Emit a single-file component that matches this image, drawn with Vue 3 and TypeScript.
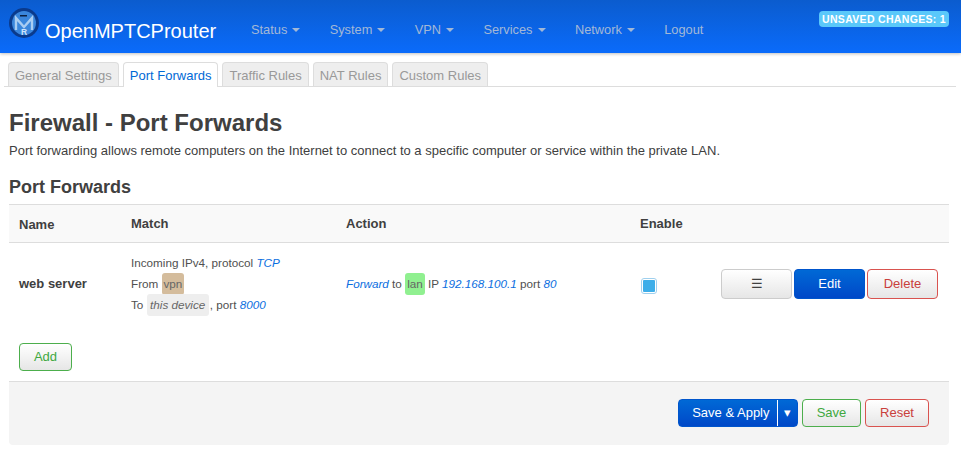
<script setup lang="ts">
const navItems: { label: string; caret: boolean }[] = [
  { label: 'Status', caret: true },
  { label: 'System', caret: true },
  { label: 'VPN', caret: true },
  { label: 'Services', caret: true },
  { label: 'Network', caret: true },
  { label: 'Logout', caret: false },
]
const tabs = ['General Settings', 'Port Forwards', 'Traffic Rules', 'NAT Rules', 'Custom Rules']
</script>

<template>
  <div class="page">
    <header class="topbar">
      <a class="brand">
        <svg class="logo" width="32" height="32" viewBox="0 0 32 32">
          <circle cx="16" cy="16" r="15" fill="#0a3a8c" />
          <circle cx="16" cy="16" r="12" fill="#3a86dc" />
          <rect x="12" y="8" width="7" height="1.5" fill="#0b1f40" />
          <path d="M8 23V11l8 9 8-9v12" fill="none" stroke="#a9cdf2" stroke-width="2.4" />
          <text x="16" y="27.5" font-size="8.5" font-weight="700" text-anchor="middle" fill="#cfe4fa" font-family="Liberation Sans, sans-serif">R</text>
        </svg>
        <span class="brand-name">OpenMPTCProuter</span>
      </a>
      <nav class="nav">
        <a v-for="item in navItems" :key="item.label" class="nav-item">
          {{ item.label }}<i v-if="item.caret" class="caret"></i>
        </a>
      </nav>
      <span class="unsaved">UNSAVED CHANGES: 1</span>
    </header>

    <main class="content">
      <ul class="tabs">
        <li v-for="tab in tabs" :key="tab" class="tab" :class="{ active: tab === 'Port Forwards' }">{{ tab }}</li>
      </ul>

      <h2 class="title">Firewall - Port Forwards</h2>
      <p class="desc">Port forwarding allows remote computers on the Internet to connect to a specific computer or service within the private LAN.</p>
      <h3 class="subtitle">Port Forwards</h3>

      <table class="table">
        <colgroup>
          <col class="c1" /><col class="c2" /><col class="c3" /><col class="c4" /><col />
        </colgroup>
        <thead>
          <tr>
            <th class="th-name">Name</th>
            <th>Match</th>
            <th>Action</th>
            <th>Enable</th>
            <th></th>
          </tr>
        </thead>
        <tbody>
          <tr>
            <td class="name">web server</td>
            <td class="match">
              <div>Incoming IPv4, protocol <var>TCP</var></div>
              <div>From <span class="zone vpn">vpn</span></div>
              <div>To <span class="zone device"><em>this device</em></span>, port <var>8000</var></div>
            </td>
            <td class="action">
              <var>Forward</var> to <span class="zone lan">lan</span> IP <var>192.168.100.1</var> port <var>80</var>
            </td>
            <td class="enable"><span class="check"></span></td>
            <td>
              <div class="row-btns">
                <button class="btn neutral">☰</button>
                <button class="btn primary">Edit</button>
                <button class="btn danger">Delete</button>
              </div>
            </td>
          </tr>
        </tbody>
      </table>

      <div class="add-row"><button class="btn success add">Add</button></div>

      <div class="actions">
        <div class="split">
          <span class="split-main">Save &amp; Apply</span>
          <span class="split-arrow">▾</span>
        </div>
        <button class="btn success save">Save</button>
        <button class="btn danger reset">Reset</button>
      </div>
    </main>
  </div>
</template>

<style>
html, body { margin: 0; background: #fff; }
</style>

<style scoped>
.page {
  font-family: "Liberation Sans", Arial, sans-serif;
  font-size: 13px;
  color: #404040;
  line-height: 18px;
}
.topbar {
  display: flex;
  height: 53px;
  background: linear-gradient(to bottom, #0b5cce, #0a6bfb);
  box-shadow: 0 1px 3px rgba(0, 0, 0, 0.25);
  box-sizing: border-box;
  padding-left: 8px;
  position: relative;
}
.brand { display: flex; width: 243px; flex: none; }
.logo { margin-top: 7px; flex: none; }
.brand-name {
  color: #fff;
  font-size: 20px;
  line-height: 24px;
  margin: 19px 0 0 5px;
}
.nav { display: flex; flex: 1; align-items: flex-start; }
.nav-item {
  color: #a3b8d6;
  font-size: 12.8px;
  padding: 21px 0 0;
  margin-right: 29.4px;
  white-space: nowrap;
}
.caret {
  display: inline-block;
  width: 0;
  height: 0;
  margin-left: 5px;
  vertical-align: 2px;
  border-top: 4px solid #a3b8d6;
  border-left: 4px solid transparent;
  border-right: 4px solid transparent;
}
.unsaved {
  align-self: flex-start;
  margin: 11px 12px 0 0;
  padding: 0 3px;
  height: 16px;
  line-height: 16px;
  border-radius: 4px;
  background: #5ac8fa;
  color: #fff;
  font-size: 10.5px;
  font-weight: 700;
  letter-spacing: 0.32px;
  white-space: nowrap;
}
.content { padding: 9px 12px 10px 9px; }
.tabs {
  display: flex;
  list-style: none;
  margin: 0 -7px 0 -5px;
  padding: 0 0 0 4px;
  border-bottom: 1px solid #ddd;
  gap: 4px;
  height: 24px;
}
.tab {
  height: 24px;
  box-sizing: border-box;
  padding: 2px 6px 0;
  line-height: 22px;
  border: 1px solid #ddd;
  border-bottom: none;
  border-radius: 4px 4px 0 0;
  background: #eee;
  color: #999;
  white-space: nowrap;
}
.tab.active {
  height: 25px;
  background: #fff;
  color: #0069d6;
}
.title {
  margin: 22px 0 0;
  font-size: 24px;
  line-height: 28px;
  font-weight: 700;
  color: #404040;
}
.desc { margin: 5px 0 0; line-height: 18px; }
.subtitle {
  margin: 16px 0 0;
  font-size: 18px;
  line-height: 22px;
  font-weight: 700;
}
.table {
  width: 940px;
  margin-top: 6px;
  border-collapse: collapse;
  table-layout: fixed;
}
.c1 { width: 112px; }
.c2 { width: 215px; }
.c3 { width: 294px; }
.c4 { width: 81px; }
th {
  box-sizing: border-box;
  height: 38px;
  padding: 0 10px;
  text-align: left;
  font-weight: 700;
  background: #f9f9f9;
  border-top: 1px solid #ddd;
  border-bottom: 1px solid #ddd;
}
th.th-name { padding-top: 2px; }
td {
  box-sizing: border-box;
  padding: 0 10px;
  height: 82px;
  vertical-align: middle;
  font-size: 11.7px;
  color: #505050;
  border: none;
}
td.name { font-size: 13px; font-weight: 700; color: #404040; }
td.match { padding-bottom: 1px; }
td.enable { padding-top: 4px; }
.match div { line-height: 21px; height: 21px; white-space: nowrap; }
.action { white-space: nowrap; }
var { font-style: italic; color: #0a6ee0; }
.zone {
  display: inline-block;
  height: 22px;
  line-height: 22px;
  padding: 0 2px;
  border-radius: 3px;
  color: #666;
}
.vpn { background: #d4bc9c; }
.lan { background: #90f090; }
.device { background: #eee; padding: 0 3.5px; margin-right: 1px; }
.device em { font-style: italic; }
.check {
  display: block;
  box-sizing: border-box;
  width: 16px;
  height: 16px;
  margin: 0 0 0 1px;
  padding: 1px;
  background: #3daee9;
  background-clip: content-box;
  border: 1px solid #9fd0ee;
  border-radius: 3px;
}
.row-btns {
  display: flex;
  gap: 2px;
}
.btn {
  box-sizing: border-box;
  font-family: inherit;
  font-size: 13px;
  height: 30px;
  width: 71px;
  flex: none;
  padding: 0;
  border-radius: 4px;
  border: 1px solid #ccc;
  background: linear-gradient(to bottom, #fff, #e6e6e6);
  color: #404040;
}
.btn.primary {
  background: linear-gradient(to bottom, #0069d6, #0048c8);
  border-color: #0055cc;
  color: #fff;
}
.btn.danger { border-color: #d9534f; color: #c9403c; }
.btn.success { border-color: #4cae4c; color: #3fa83f; }
.add-row { padding: 0 10px; margin-top: 18px; }
.btn.add { width: 53px; height: 28px; }
.actions {
  display: flex;
  justify-content: flex-end;
  align-items: flex-start;
  gap: 4px;
  width: 940px;
  box-sizing: border-box;
  margin-top: 10px;
  padding: 17px 20px 18px 0;
  height: 64px;
  background: #f4f4f4;
  border-top: 1px solid #ddd;
  border-radius: 0 0 4px 4px;
}
.split {
  display: flex;
  box-sizing: border-box;
  width: 120px;
  height: 28px;
  border-radius: 4px;
  background: linear-gradient(to bottom, #0069d6, #0048c8);
  color: #fff;
  line-height: 26px;
  border: 1px solid #0055cc;
}
.split-main {
  flex: none;
  width: 99px;
  text-align: right;
  padding-right: 7.5px;
  box-sizing: border-box;
  border-right: 1px solid #fff;
}
.split-arrow { flex: 1; text-align: center; font-size: 13px; }
.btn.save { width: 59px; height: 28px; }
.btn.reset { width: 64px; height: 28px; }
</style>
